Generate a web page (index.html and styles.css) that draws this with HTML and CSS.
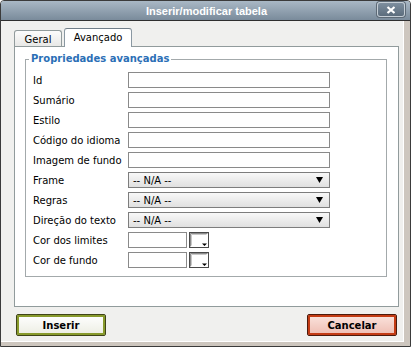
FILE: index.html
```html
<!DOCTYPE html>
<html lang="pt">
<head>
<meta charset="utf-8">
<title>Inserir/modificar tabela</title>
<link rel="stylesheet" href="styles.css">
</head>
<body>
<div class="window">
  <div class="titlebar">
    <span class="title">Inserir/modificar tabela</span>
    <span class="close">
      <svg width="10" height="8" viewBox="0 0 10 8"><path d="M1.5 1 L8.5 7 M8.5 1 L1.5 7" stroke="#fff" stroke-width="2.2" fill="none"/></svg>
    </span>
  </div>
  <div class="dialog">
    <div class="tabs">
      <span class="tab">Geral</span>
      <span class="tab current">Avançado</span>
    </div>
    <div class="panel">
      <fieldset class="group">
        <legend>Propriedades avançadas</legend>
        <div class="form">
          <label>Id</label><span class="text"></span>
          <label>Sumário</label><span class="text"></span>
          <label>Estilo</label><span class="text"></span>
          <label>Código do idioma</label><span class="text"></span>
          <label>Imagem de fundo</label><span class="text"></span>
          <label>Frame</label>
          <span class="select"><span>-- N/A --</span><svg width="7" height="6" viewBox="0 0 7 6"><path d="M0 0 H7 L3.5 6 Z" fill="#000"/></svg></span>
          <label>Regras</label>
          <span class="select"><span>-- N/A --</span><svg width="7" height="6" viewBox="0 0 7 6"><path d="M0 0 H7 L3.5 6 Z" fill="#000"/></svg></span>
          <label>Direção do texto</label>
          <span class="select"><span>-- N/A --</span><svg width="7" height="6" viewBox="0 0 7 6"><path d="M0 0 H7 L3.5 6 Z" fill="#000"/></svg></span>
          <label>Cor dos limites</label>
          <span class="colorrow"><span class="text short"></span><span class="picker"><svg width="20" height="16" viewBox="0 0 20 16"><rect x="0.5" y="0.5" width="19" height="15" fill="#fff" stroke="#4a4a4a"/><path d="M1.5 14.5 V1.5 H18.5" stroke="#8c8c8c" fill="none"/><path d="M2.5 13.5 V2.5 H17.5" stroke="#c8c8c8" fill="none"/><path d="M13 11.5 H18 L15.5 14 Z" fill="#000"/></svg></span></span>
          <label>Cor de fundo</label>
          <span class="colorrow"><span class="text short"></span><span class="picker"><svg width="20" height="16" viewBox="0 0 20 16"><rect x="0.5" y="0.5" width="19" height="15" fill="#fff" stroke="#4a4a4a"/><path d="M1.5 14.5 V1.5 H18.5" stroke="#8c8c8c" fill="none"/><path d="M2.5 13.5 V2.5 H17.5" stroke="#c8c8c8" fill="none"/><path d="M13 11.5 H18 L15.5 14 Z" fill="#000"/></svg></span></span>
        </div>
      </fieldset>
    </div>
    <div class="buttons">
      <button class="btn insert">Inserir</button>
      <button class="btn cancel">Cancelar</button>
    </div>
  </div>
</div>
</body>
</html>
```
FILE: styles.css
```css
* { box-sizing: border-box; }
html, body { margin: 0; padding: 0; background: #fff; }
body {
  width: 412px;
  height: 348px;
  overflow: hidden;
  font-family: "DejaVu Sans", Verdana, sans-serif;
  font-size: 10px;
  color: #000;
}
.window {
  width: 411px;
  height: 347px;
  border: 1px solid #3b3b3b;
  border-radius: 4px 4px 0 0;
  background: #f0f0ee;
  display: flex;
  flex-direction: column;
  overflow: hidden;
}
.titlebar {
  position: relative;
  height: 20px;
  flex: none;
  border-bottom: 1px solid #2f2f2f;
  background: linear-gradient(#a9b8c5, #7a8b9b);
  display: flex;
  align-items: center;
  justify-content: center;
}
.title {
  color: #fff;
  font: bold 11px "Liberation Sans", Arial, sans-serif;
  margin-left: 2px;
}
.close {
  position: absolute;
  right: 5px;
  top: 1px;
  width: 28px;
  height: 15px;
  border: 1px solid #c5ced6;
  border-radius: 3px;
  background: linear-gradient(#7d8e9e, #5c6d7d);
  box-shadow: 0 0 0 1px #5d6a76;
  display: flex;
  align-items: center;
  justify-content: center;
}
.dialog {
  flex: none;
  height: 325px;
  padding: 7px 5px 0 13px;
  border-right: 6px solid #cdc6be;
  border-bottom: 4px solid #cdc6be;
  box-shadow: inset -1px -1px 0 #fff;
}
.tabs {
  position: relative;
  z-index: 1;
  height: 18px;
  display: flex;
  align-items: flex-end;
  gap: 2px;
}
.tab {
  width: 48px;
  height: 16px;
  border: 1px solid #919b9c;
  border-bottom: none;
  border-radius: 3px 3px 0 0;
  background: linear-gradient(#fcfcfc, #e8e8e6);
  display: flex;
  align-items: center;
  justify-content: center;
  padding-top: 1px;
}
.tab.current {
  width: 68px;
  height: 19px;
  margin-bottom: -1px;
  background: #fff;
  border-color: #8a98a2;
  border-top-color: #6f7d88;
  padding-top: 0;
  padding-bottom: 2px;
}
.panel {
  height: 261px;
  border: 1px solid #919b9c;
  background: #fff;
  padding: 5px 11px 0 10px;
}
.group {
  margin: 0;
  padding: 4px 7px 6px;
  border: 1px solid #a3a9ab;
  min-width: 0;
}
.group legend {
  padding: 0 2px;
  margin-left: -4px;
  line-height: 14px;
  font-weight: bold;
  color: #2b6fb6;
}
.form {
  display: grid;
  grid-template-columns: 95px auto;
  grid-auto-rows: 20px;
  align-items: center;
  justify-items: start;
}
.form label { white-space: nowrap; }
.text {
  display: block;
  width: 202px;
  height: 16px;
  border: 1px solid #8a8a8a;
  background: #fff;
}
.text.short { width: 59px; }
.select {
  width: 202px;
  height: 16px;
  border: 1px solid #7d7d7d;
  background: linear-gradient(#f8f8f8, #e0e0e0);
  display: flex;
  align-items: center;
  justify-content: space-between;
  padding: 0 6px 0 4px;
}
.select svg { display: block; }
.colorrow {
  display: flex;
  align-items: center;
  gap: 2px;
}
.picker svg { display: block; }
.buttons {
  display: flex;
  justify-content: space-between;
  padding: 0 2px;
  margin-top: 7px;
}
.btn {
  width: 90px;
  height: 22px;
  margin: 0;
  padding: 0;
  font: bold 10px "DejaVu Sans", Verdana, sans-serif;
  color: #000;
  border-radius: 2px;
}
.insert {
  border: 1px solid #3f4418;
  box-shadow: inset 0 0 0 2px #889a2c;
  background: linear-gradient(#ffffff, #ecede2);
}
.cancel {
  border: 1px solid #4c1a0c;
  box-shadow: inset 0 0 0 2px #c33b14;
  background: linear-gradient(#fbe4de, #eebcb1);
}
```
